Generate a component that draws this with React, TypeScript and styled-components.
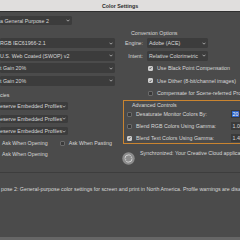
import React from 'react';
import styled, { createGlobalStyle } from 'styled-components';

const Global = createGlobalStyle`
  html, body { margin: 0; padding: 0; background: #4b4b4b; }
  #root { width: 240px; height: 240px; }
`;

const Window = styled.div`
  width: 240px;
  height: 240px;
  overflow: hidden;
  background: #4b4b4b;
  font-family: "Liberation Sans", Arial, sans-serif;
  font-size: 5.3px;
  color: #d8d8d8;
  display: flex;
  flex-direction: column;
`;

const TitleBar = styled.div`
  flex: none;
  height: 11px;
  background: #e0dedd;
  border-bottom: 1px solid #2f2f2f;
  display: flex;
  align-items: center;
  justify-content: center;
  font-weight: bold;
  color: #2a2a2a;
`;

const Body = styled.div`
  flex: none;
  height: 160px;
  padding-top: 4px;
  box-sizing: border-box;
  display: flex;
  flex-direction: column;
`;

const Columns = styled.div`
  display: flex;
  padding-top: 3px;
`;

const LeftCol = styled.div`
  flex: none;
  width: 116px;
  display: flex;
  flex-direction: column;
`;

const RightCol = styled.div`
  flex: none;
  width: 129px;
  margin-left: 7px;
  display: flex;
  flex-direction: column;
`;

const Stack = styled.div<{ $gap: number; $top?: number }>`
  display: flex;
  flex-direction: column;
  gap: ${p => p.$gap}px;
  margin-top: ${p => p.$top ?? 0}px;
`;

const Heading = styled.div<{ $indent?: number }>`
  height: 10px;
  display: flex;
  align-items: center;
  padding-left: ${p => p.$indent ?? 0}px;
  white-space: nowrap;
`;

const Select = styled.div<{ $w: number; $h?: number; $pad?: number }>`
  flex: none;
  position: relative;
  width: ${p => p.$w}px;
  height: ${p => p.$h ?? 10}px;
  box-sizing: border-box;
  background: #3c3c3c;
  border-radius: 1.5px;
  display: flex;
  align-items: center;
  padding-left: ${p => p.$pad ?? 0}px;
  padding-right: 6px;
  white-space: nowrap;
  overflow: hidden;
`;

const SelectText = styled.span`
  flex: 1;
`;

const ChevronWrap = styled.span`
  position: absolute;
  right: 2px;
  top: 50%;
  margin-top: -1.5px;
  width: 4px;
  height: 3px;
  display: flex;
`;

const Chevron = () => (
  <ChevronWrap>
    <svg width="4" height="3" viewBox="0 0 4 3">
      <path d="M0.5 0.7 L2 2.2 L3.5 0.7" fill="none" stroke="#cfcfcf" strokeWidth="0.7" />
    </svg>
  </ChevronWrap>
);

const Dropdown: React.FC<{ w: number; h?: number; pad?: number; children: React.ReactNode }> = ({ w, h, pad, children }) => (
  <Select $w={w} $h={h} $pad={pad}>
    <SelectText>{children}</SelectText>
    <Chevron />
  </Select>
);

const Line = styled.div<{ $h?: number; $indent?: number; $top?: number; $shift?: number }>`
  flex: none;
  height: ${p => p.$h ?? 10}px;
  display: flex;
  align-items: center;
  padding-left: ${p => p.$indent ?? 0}px;
  margin-top: ${p => p.$top ?? 0}px;
  margin-left: ${p => p.$shift ?? 0}px;
  white-space: nowrap;
`;

const FieldLabel = styled.span`
  width: 20px;
  text-align: right;
  margin-right: 4px;
  flex: none;
`;

const Box = styled.span<{ $on: boolean }>`
  flex: none;
  width: 5px;
  height: 5px;
  box-sizing: border-box;
  border-radius: 1px;
  margin-right: 4px;
  background: ${p => (p.$on ? '#cdcdcd' : '#3a3a3a')};
  border: 0.5px solid ${p => (p.$on ? '#cdcdcd' : '#6a6a6a')};
  display: flex;
  align-items: center;
  justify-content: center;
`;

const Check: React.FC<{ on: boolean; label: string }> = ({ on, label }) => (
  <>
    <Box $on={on}>
      {on && (
        <svg width="4" height="4" viewBox="0 0 4 4">
          <path d="M0.7 2 L1.6 3 L3.3 0.8" fill="none" stroke="#2a2a2a" strokeWidth="0.8" />
        </svg>
      )}
    </Box>
    <span>{label}</span>
  </>
);

const Spacer = styled.span<{ $w: number }>`
  flex: none;
  width: ${p => p.$w}px;
`;

const Advanced = styled.div`
  margin-top: 2px;
  border: 1px solid #c98430;
  border-right: none;
  padding: 0 1px 0 3px;
  display: flex;
  flex-direction: column;
`;

const AdvTitle = styled.div`
  height: 8px;
  display: flex;
  align-items: center;
  padding-left: 5px;
`;

const AdvRow = styled.div`
  height: 10px;
  display: flex;
  align-items: center;
  white-space: nowrap;
`;

const Field = styled.span<{ $sel?: boolean }>`
  margin-left: auto;
  flex: none;
  width: 20px;
  height: 8px;
  box-sizing: border-box;
  background: #3a3a3a;
  display: flex;
  align-items: center;
  padding-left: 1px;
  & > span {
    padding: 0 0.5px;
    background: ${p => (p.$sel ? '#2c63c9' : 'transparent')};
    color: ${p => (p.$sel ? '#ffffff' : '#d8d8d8')};
  }
`;

const SyncRow = styled.div`
  margin-top: 8px;
  margin-left: -1px;
  display: flex;
  align-items: flex-start;
  white-space: nowrap;
`;

const SyncText = styled.span`
  margin-left: 5px;
  margin-top: -2px;
  line-height: 6px;
`;

const SyncIcon = () => (
  <svg width="13" height="13" viewBox="0 0 13 13" style={{ flex: 'none' }}>
    <circle cx="6.5" cy="6.5" r="6.2" fill="#8c8c8c" />
    <circle cx="6.5" cy="6.5" r="3.6" fill="none" stroke="#d9d9d9" strokeWidth="0.9" strokeDasharray="8 3" />
    <path d="M9.3 4.2 L10.4 5.6 L8.6 5.7 Z" fill="#d9d9d9" />
    <path d="M3.7 8.8 L2.6 7.4 L4.4 7.3 Z" fill="#d9d9d9" />
  </svg>
);

const Description = styled.div`
  flex: 1;
  border-top: 1px solid #3d3d3d;
  display: flex;
  flex-direction: column;
`;

const DescText = styled.div`
  margin-top: 13px;
  padding-left: 1px;
  height: 6px;
  line-height: 6px;
  white-space: nowrap;
`;

const BottomStrip = styled.div`
  margin-top: auto;
  height: 3px;
  background: #666666;
`;

export default function App() {
  return (
    <Window>
      <Global />
      <TitleBar>Color Settings</TitleBar>
      <Body>
        <Dropdown w={72} h={9}>a General Purpose 2</Dropdown>
        <Columns>
          <LeftCol>
            <Heading />
            <Stack $gap={2.5}>
              <Dropdown w={115}>RGB IEC61966-2.1</Dropdown>
              <Dropdown w={115}>U.S. Web Coated (SWOP) v2</Dropdown>
              <Dropdown w={115}>t Gain 20%</Dropdown>
              <Dropdown w={115}>t Gain 20%</Dropdown>
            </Stack>
            <Line $top={4}>cies</Line>
            <Stack $gap={4.5} $top={2.5}>
              <Dropdown w={68} h={8}>eserve Embedded Profiles</Dropdown>
              <Dropdown w={68} h={8}>eserve Embedded Profiles</Dropdown>
              <Dropdown w={68} h={8}>eserve Embedded Profiles</Dropdown>
            </Stack>
            <Line $top={3} $shift={-7}>
              <Check on={false} label="Ask When Opening" />
              <Spacer $w={12} />
              <Check on={false} label="Ask When Pasting" />
            </Line>
            <Line $top={1} $shift={-7}>
              <Check on={false} label="Ask When Opening" />
            </Line>
          </LeftCol>
          <RightCol>
            <Heading $indent={8}>Conversion Options</Heading>
            <Stack $gap={2.5}>
              <Line>
                <FieldLabel>Engine:</FieldLabel>
                <Dropdown w={61} pad={2}>Adobe (ACE)</Dropdown>
              </Line>
              <Line>
                <FieldLabel>Intent:</FieldLabel>
                <Dropdown w={61} pad={2}>Relative Colorimetric</Dropdown>
              </Line>
              <Line $indent={25}>
                <Check on label="Use Black Point Compensation" />
              </Line>
              <Line $indent={25}>
                <Check on label="Use Dither (8-bit/channel images)" />
              </Line>
              <Line $indent={25}>
                <Check on={false} label="Compensate for Scene-referred Profiles" />
              </Line>
            </Stack>
            <Advanced>
              <AdvTitle>Advanced Controls</AdvTitle>
              <Stack $gap={2}>
                <AdvRow>
                  <Check on={false} label="Desaturate Monitor Colors By:" />
                  <Field $sel><span>20</span></Field>
                </AdvRow>
                <AdvRow>
                  <Check on={false} label="Blend RGB Colors Using Gamma:" />
                  <Field><span>1.00</span></Field>
                </AdvRow>
                <AdvRow>
                  <Check on label="Blend Text Colors Using Gamma:" />
                  <Field><span>1.45</span></Field>
                </AdvRow>
              </Stack>
            </Advanced>
            <SyncRow>
              <SyncIcon />
              <SyncText>Synchronized: Your Creative Cloud applications are synchronized</SyncText>
            </SyncRow>
          </RightCol>
        </Columns>
      </Body>
      <Description>
        <DescText>pose 2:  General-purpose color settings for screen and print in North America. Profile warnings are disabled.</DescText>
        <BottomStrip />
      </Description>
    </Window>
  );
}
